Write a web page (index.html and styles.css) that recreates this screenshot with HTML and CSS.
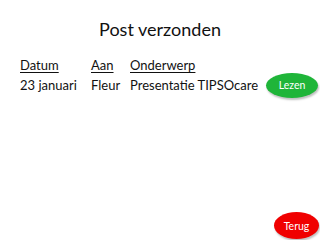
FILE: index.html
```html
<!DOCTYPE html>
<html>
<head>
<meta charset="utf-8">
<link rel="stylesheet" href="styles.css">
</head>
<body>
<div class="page">
  <h1 class="title">Post verzonden</h1>
  <div class="table">
    <div class="head">Datum</div>
    <div class="head">Aan</div>
    <div class="head">Onderwerp</div>
    <div></div>
    <div class="cell">23 januari</div>
    <div class="cell">Fleur</div>
    <div class="cell">Presentatie TIPSOcare</div>
    <div class="cell"><span class="btn green">Lezen</span></div>
  </div>
  <div class="footer"><span class="btn red">Terug</span></div>
</div>
</body>
</html>
```
FILE: styles.css
```css
html, body { margin: 0; padding: 0; background: #fff; }
.page {
  width: 320px;
  height: 240px;
  display: flex;
  flex-direction: column;
  font-family: Lato, "Open Sans", sans-serif;
  color: #111;
  overflow: hidden;
}
.title {
  margin: 18px 0 0 0;
  font-weight: normal;
  font-size: 18px;
  line-height: 22px;
  text-align: center;
}
.table {
  margin: 15px 0 0 20px;
  display: grid;
  grid-template-columns: 71px 39px 126px auto;
  grid-auto-rows: 20px;
  align-items: center;
  font-size: 13px;
}
.head { text-decoration: underline; text-underline-offset: 2px; }
.cell { white-space: nowrap; }
.btn {
  display: flex;
  align-items: center;
  justify-content: center;
  color: #fff;
  border-radius: 50%;
  box-shadow: 1px 2px 2px rgba(0,0,0,0.25);
  font-size: 10.5px;
}
.green {
  margin-left: 10px;
  width: 52px;
  height: 25px;
  background: #1fb539;
}
.footer {
  margin-top: auto;
  display: flex;
  justify-content: flex-end;
  padding: 0 1px 1px 0;
}
.red {
  width: 45px;
  height: 27px;
  background: #f00000;
}
```
